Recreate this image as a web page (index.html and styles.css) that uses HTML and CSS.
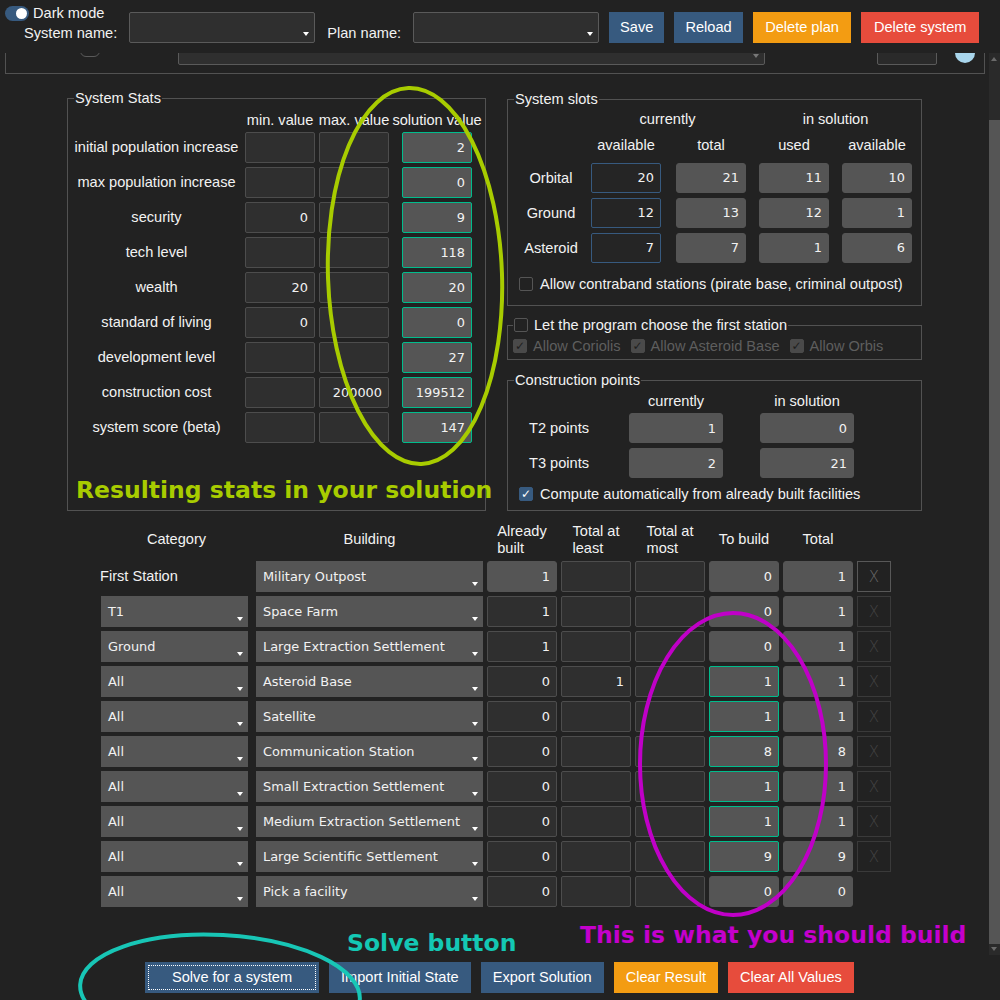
FILE: index.html
```html
<!DOCTYPE html>
<html>
<head>
<meta charset="utf-8">
<title>Colony planner</title>
<link rel="stylesheet" href="styles.css">
</head>
<body>
<div class="toggle-row"><span class="switch"><span class="knob"></span></span><span class="toggle-text">Dark mode</span></div>

<header class="topbar">
  <span class="top-label">System name:</span>
  <div class="combo top-combo"><span class="arrow"></span></div>
  <span class="top-label">Plan name:</span>
  <div class="combo top-combo"><span class="arrow"></span></div>
  <button class="btn primary">Save</button>
  <button class="btn primary">Reload</button>
  <button class="btn warning wide">Delete plan</button>
  <button class="btn danger wide">Delete system</button>
</header>

<main class="scroller">
  <div class="peek">
    <div class="peek-frame">
      <span class="peek-check"></span>
      <span class="peek-combo"><span class="arrow"></span></span>
      <span class="peek-box"></span>
      <span class="peek-help"></span>
    </div>
  </div>

  <div class="panels">
    <fieldset class="frame stats">
      <legend>System Stats</legend>
      <div class="stats-grid">
        <span></span><span class="hd">min. value</span><span class="hd">max. value</span><span class="hd">solution value</span>

        <span class="lbl">initial population increase</span><span class="entry"></span><span class="entry"></span><span class="entry ro ok">2</span>
        <span class="lbl">max population increase</span><span class="entry"></span><span class="entry"></span><span class="entry ro ok">0</span>
        <span class="lbl">security</span><span class="entry">0</span><span class="entry"></span><span class="entry ro ok">9</span>
        <span class="lbl">tech level</span><span class="entry"></span><span class="entry"></span><span class="entry ro ok">118</span>
        <span class="lbl">wealth</span><span class="entry">20</span><span class="entry"></span><span class="entry ro ok">20</span>
        <span class="lbl">standard of living</span><span class="entry">0</span><span class="entry"></span><span class="entry ro ok">0</span>
        <span class="lbl">development level</span><span class="entry"></span><span class="entry"></span><span class="entry ro ok">27</span>
        <span class="lbl">construction cost</span><span class="entry"></span><span class="entry">200000</span><span class="entry ro ok">199512</span>
        <span class="lbl">system score (beta)</span><span class="entry"></span><span class="entry"></span><span class="entry ro ok">147</span>
      </div>
    </fieldset>

    <div class="right-col">
      <fieldset class="frame slots">
        <legend>System slots</legend>
        <div class="slots-grid">
          <span></span><span class="hd span-cur">currently</span><span class="hd span-sol">in solution</span>
          <span></span><span class="sub">available</span><span class="sub">total</span><span class="sub">used</span><span class="sub">available</span>

          <span class="slot-lbl">Orbital</span><span class="entry slot focus">20</span><span class="entry slot ro">21</span><span class="entry slot ro">11</span><span class="entry slot ro">10</span>
          <span class="slot-lbl">Ground</span><span class="entry slot focus">12</span><span class="entry slot ro">13</span><span class="entry slot ro">12</span><span class="entry slot ro">1</span>
          <span class="slot-lbl">Asteroid</span><span class="entry slot focus">7</span><span class="entry slot ro">7</span><span class="entry slot ro">1</span><span class="entry slot ro">6</span>
        </div>
        <div class="check-line contraband"><span class="cbox"></span><span>Allow contraband stations (pirate base, criminal outpost)</span></div>
      </fieldset>

      <fieldset class="frame first-station">
        <legend class="check-legend"><span class="cbox"></span><span>Let the program choose the first station</span></legend>
        <div class="disabled-row">
          <span class="check-line dis"><span class="cbox checked-dis">✓</span><span>Allow Coriolis</span></span>
          <span class="check-line dis"><span class="cbox checked-dis">✓</span><span>Allow Asteroid Base</span></span>
          <span class="check-line dis"><span class="cbox checked-dis">✓</span><span>Allow Orbis</span></span>
        </div>
      </fieldset>

      <fieldset class="frame points">
        <legend>Construction points</legend>
        <div class="points-grid">
          <span></span><span class="hd pt-hd">currently</span><span class="hd pt-hd">in solution</span>
          <span class="pt-lbl">T2 points</span><span class="entry pt ro">1</span><span class="entry pt ro">0</span>
          <span class="pt-lbl">T3 points</span><span class="entry pt ro">2</span><span class="entry pt ro">21</span>
        </div>
        <div class="check-line compute"><span class="cbox checked">✓</span><span>Compute automatically from already built facilities</span></div>
      </fieldset>
    </div>
  </div>

  <div class="build-table">
    <span class="th">Category</span>
    <span class="th">Building</span>
    <span class="th two"><span>Already<br>built</span></span>
    <span class="th two"><span>Total at<br>least</span></span>
    <span class="th two"><span>Total at<br>most</span></span>
    <span class="th">To build</span>
    <span class="th">Total</span>
    <span></span>

    <span class="cat-label">First Station</span>
    <span class="combo fill bld">Military Outpost<span class="arrow"></span></span>
    <span class="entry ro">1</span><span class="entry"></span><span class="entry"></span><span class="entry ro">0</span><span class="entry ro">1</span><span class="xbtn first">X</span>

    <span class="combo fill cat">T1<span class="arrow"></span></span>
    <span class="combo fill bld">Space Farm<span class="arrow"></span></span>
    <span class="entry">1</span><span class="entry"></span><span class="entry"></span><span class="entry ro">0</span><span class="entry ro">1</span><span class="xbtn">X</span>

    <span class="combo fill cat">Ground<span class="arrow"></span></span>
    <span class="combo fill bld">Large Extraction Settlement<span class="arrow"></span></span>
    <span class="entry">1</span><span class="entry"></span><span class="entry"></span><span class="entry ro">0</span><span class="entry ro">1</span><span class="xbtn">X</span>

    <span class="combo fill cat">All<span class="arrow"></span></span>
    <span class="combo fill bld">Asteroid Base<span class="arrow"></span></span>
    <span class="entry">0</span><span class="entry">1</span><span class="entry"></span><span class="entry ro ok">1</span><span class="entry ro">1</span><span class="xbtn">X</span>

    <span class="combo fill cat">All<span class="arrow"></span></span>
    <span class="combo fill bld">Satellite<span class="arrow"></span></span>
    <span class="entry">0</span><span class="entry"></span><span class="entry"></span><span class="entry ro ok">1</span><span class="entry ro">1</span><span class="xbtn">X</span>

    <span class="combo fill cat">All<span class="arrow"></span></span>
    <span class="combo fill bld">Communication Station<span class="arrow"></span></span>
    <span class="entry">0</span><span class="entry"></span><span class="entry"></span><span class="entry ro ok">8</span><span class="entry ro">8</span><span class="xbtn">X</span>

    <span class="combo fill cat">All<span class="arrow"></span></span>
    <span class="combo fill bld">Small Extraction Settlement<span class="arrow"></span></span>
    <span class="entry">0</span><span class="entry"></span><span class="entry"></span><span class="entry ro ok">1</span><span class="entry ro">1</span><span class="xbtn">X</span>

    <span class="combo fill cat">All<span class="arrow"></span></span>
    <span class="combo fill bld">Medium Extraction Settlement<span class="arrow"></span></span>
    <span class="entry">0</span><span class="entry"></span><span class="entry"></span><span class="entry ro ok">1</span><span class="entry ro">1</span><span class="xbtn">X</span>

    <span class="combo fill cat">All<span class="arrow"></span></span>
    <span class="combo fill bld">Large Scientific Settlement<span class="arrow"></span></span>
    <span class="entry">0</span><span class="entry"></span><span class="entry"></span><span class="entry ro ok">9</span><span class="entry ro">9</span><span class="xbtn">X</span>

    <span class="combo fill cat">All<span class="arrow"></span></span>
    <span class="combo fill bld">Pick a facility<span class="arrow"></span></span>
    <span class="entry">0</span><span class="entry"></span><span class="entry"></span><span class="entry ro">0</span><span class="entry ro">0</span><span></span>
  </div>

  <div class="scrollbar"><span class="sb-up"></span><span class="sb-thumb"></span><span class="sb-down"></span></div>
</main>

<footer class="footer">
  <button class="btn primary solve">Solve for a system</button>
  <button class="btn primary">Import Initial State</button>
  <button class="btn primary">Export Solution</button>
  <button class="btn warning">Clear Result</button>
  <button class="btn danger">Clear All Values</button>
</footer>

<svg class="marks" width="1000" height="1000" viewBox="0 0 1000 1000">
  <ellipse cx="415" cy="276" rx="87" ry="188" transform="rotate(-2 415 276)" fill="none" stroke="#a8cc00" stroke-width="4"/>
  <ellipse cx="733" cy="764" rx="93" ry="151" fill="none" stroke="#c000c8" stroke-width="4"/>
  <ellipse cx="220" cy="992" rx="140" ry="57" transform="rotate(3 220 992)" fill="none" stroke="#18c6b6" stroke-width="4"/>
</svg>
<span class="note note-stats">Resulting stats in your solution</span>
<span class="note note-solve">Solve button</span>
<span class="note note-build">This is what you should build</span>
</body>
</html>
```

FILE: styles.css
```css
* { box-sizing: border-box; }

html, body {
  margin: 0;
  padding: 0;
  background: #222222;
  color: #f2f2f2;
  font-family: "Liberation Sans", Arial, sans-serif;
  font-size: 14.6px;
  width: 1000px;
  height: 1000px;
  overflow: hidden;
}

/* ---------- top bar ---------- */
.toggle-row {
  position: absolute;
  left: 5px;
  top: 5px;
  display: flex;
  align-items: center;
  gap: 4px;
  z-index: 2;
  line-height: 16px;
}
.switch {
  width: 24px;
  height: 15px;
  border-radius: 8px;
  background: #375a7f;
  position: relative;
  display: inline-block;
}
.knob {
  position: absolute;
  right: 2px;
  top: 2px;
  width: 11px;
  height: 11px;
  border-radius: 50%;
  background: #ffffff;
}

.topbar {
  height: 53px;
  padding: 12px 0 0 24px;
  display: flex;
  align-items: flex-start;
}
.top-label {
  line-height: 16px;
  margin-top: 13px;
  margin-right: 12px;
}
.top-combo {
  width: 186px;
  height: 31px;
  margin-right: 12px;
}
.top-combo + .top-label + .top-combo { margin-right: 10px; }
.combo {
  position: relative;
  display: flex;
  align-items: center;
  background: #2f2f2f;
  border: 1px solid #5a5a5a;
  border-radius: 2px;
  font-family: "DejaVu Sans", sans-serif;
  font-size: 12.9px;
  color: #f2f2f2;
}
.arrow {
  position: absolute;
  right: 5px;
  bottom: 6px;
  width: 0;
  height: 0;
  border-left: 3.5px solid transparent;
  border-right: 3.5px solid transparent;
  border-top: 4px solid #ffffff;
}

.btn {
  height: 31px;
  border: none;
  border-radius: 0;
  padding: 0 11px;
  margin-right: 10px;
  color: #ffffff;
  font-family: "Liberation Sans", Arial, sans-serif;
  font-size: 14.6px;
  line-height: 31px;
}
.btn.wide { padding: 0 12.5px; }
.primary { background: #375a7f; }
.warning { background: #f39c12; }
.danger { background: #e74c3c; }

/* ---------- scroll area ---------- */
.scroller {
  position: relative;
  height: 902px;
  overflow: hidden;
}
.peek {
  height: 22px;
  overflow: hidden;
}
.peek-frame {
  margin: -20px 0 0 5px;
  width: 980px;
  height: 41px;
  border: 1px solid #525252;
  border-top: none;
  display: flex;
  align-items: flex-end;
  padding-bottom: 8px;
}
.peek-check {
  width: 20px;
  height: 20px;
  margin-left: 74px;
  margin-bottom: 8px;
  border: 1px solid #5a5a5a;
  border-radius: 6px;
}
.peek-combo {
  position: relative;
  width: 587px;
  height: 31px;
  margin-left: 78px;
  background: #2f2f2f;
  border: 1px solid #5a5a5a;
  border-radius: 2px;
}
.peek-combo .arrow { border-top-color: #777; }
.peek-box {
  width: 60px;
  height: 31px;
  margin-left: 112px;
  background: #2a2a2a;
  border: 1px solid #5a5a5a;
  border-radius: 2px;
}
.peek-help {
  width: 20px;
  height: 20px;
  margin-left: 18px;
  margin-bottom: 2px;
  border-radius: 50%;
  background: #a9d6ec;
}

/* ---------- panels ---------- */
.panels {
  display: flex;
  align-items: flex-start;
  margin: 15px 0 0 67px;
  gap: 21px;
}
.frame {
  margin: 0;
  padding: 0;
  min-width: 0;
  border: 1px solid #525252;
}
.frame legend {
  padding: 0 1px;
  margin-left: 6px;
  line-height: 16px;
  height: 16px;
}

.stats {
  width: 419px;
  padding-bottom: 67px;
}
.stats-grid {
  display: grid;
  grid-template-columns: 177px 74px 83px 70px;
  grid-template-rows: 22px;
  grid-auto-rows: 31px;
  row-gap: 4px;
}
.hd {
  line-height: 16px;
  white-space: nowrap;
  text-align: center;
  align-self: end;
}
.stats-grid .hd {
  width: 70px;
  display: flex;
  justify-content: center;
}
.lbl {
  text-align: center;
  line-height: 31px;
  white-space: nowrap;
}

.entry {
  width: 70px;
  height: 31px;
  background: #2f2f2f;
  border: 1px solid #4d4d4d;
  border-radius: 2px;
  font-family: "DejaVu Sans", sans-serif;
  font-size: 12.9px;
  color: #f2f2f2;
  text-align: right;
  padding-right: 6px;
  line-height: 29px;
}
.entry.ro {
  background: #555555;
  border-color: #555555;
  border-radius: 3px;
}
.entry.ro.ok { border-color: #00bc8c; border-radius: 2px; }

.right-col {
  width: 415px;
  margin-top: 1px;
}
.slots { width: 415px; padding-bottom: 13px; }
.slots-grid {
  display: grid;
  grid-template-columns: 83px 85px 83px 83px 70px;
  grid-template-rows: 24px 28px 35px 35px 35px;
}
.slots-grid .hd { align-self: center; }
.span-cur { grid-column: 2 / 4; padding-right: 15px; }
.span-sol { grid-column: 4 / 6; }
.sub {
  width: 70px;
  text-align: center;
  align-self: center;
  line-height: 16px;
  white-space: nowrap;
  display: flex;
  justify-content: center;
}
.slot-lbl {
  text-align: center;
  margin-top: 4px;
  line-height: 30px;
  padding-left: 3px;
}
.entry.slot {
  height: 30px;
  margin-top: 4px;
  line-height: 28px;
}
.entry.focus {
  background: #252525;
  border-color: #375a7f;
}

.check-line {
  display: flex;
  align-items: center;
  gap: 7px;
  line-height: 16px;
  white-space: nowrap;
}
.contraband {
  margin: 12px 0 0 11px;
  height: 16px;
}
.cbox {
  width: 14px;
  height: 14px;
  flex: none;
  border: 1px solid #555555;
  border-radius: 2px;
  display: inline-flex;
  align-items: center;
  justify-content: center;
  font-family: "DejaVu Sans", sans-serif;
  font-size: 12px;
  line-height: 1;
}
.cbox.checked {
  background: #375a7f;
  border-color: #375a7f;
  color: #ffffff;
}
.cbox.checked-dis {
  background: #4a4a4a;
  border-color: #4a4a4a;
  color: #1e1e1e;
}

.first-station {
  width: 415px;
  margin-top: 11px;
}
.frame legend.check-legend {
  display: flex;
  align-items: center;
  gap: 6px;
  margin-left: 5px;
}
.disabled-row {
  height: 26px;
  display: flex;
  align-items: center;
  padding-left: 5px;
  gap: 10px;
}
.check-line.dis { color: #5e5e5e; gap: 6px; }

.points { width: 415px; margin-top: 12px; padding-bottom: 5px; }
.points-grid {
  display: grid;
  grid-template-columns: 100px 131px 94px;
  grid-template-rows: 25px 35px 35px;
  padding-left: 21px;
}
.pt-hd {
  width: 94px;
  align-self: center;
  display: flex;
  justify-content: center;
}
.pt-lbl { line-height: 30px; }
.entry.pt {
  width: 94px;
  height: 30px;
  line-height: 30px;
}
.compute {
  height: 22px;
  margin-left: 11px;
}

/* ---------- building table ---------- */
.build-table {
  display: grid;
  grid-template-columns: 151px 227px 70px 70px 70px 70px 70px 34px;
  grid-template-rows: 35px;
  grid-auto-rows: 31px;
  column-gap: 4px;
  row-gap: 4px;
  margin: 11px 0 0 101px;
  width: 790px;
}
.th {
  display: flex;
  align-items: center;
  justify-content: center;
  text-align: center;
  line-height: 17px;
  white-space: nowrap;
}
.th.two span { text-align: left; }
.cat-label {
  line-height: 31px;
  margin-left: -1px;
}
.combo.fill {
  background: #555555;
  border: none;
  border-radius: 0;
  padding-left: 7px;
  height: 31px;
  white-space: nowrap;
}
.combo.cat { width: 147px; }
.combo.bld { width: 227px; }

.xbtn {
  width: 34px;
  height: 31px;
  border: 1px solid #3a3a3a;
  display: flex;
  align-items: center;
  justify-content: center;
  color: #444444;
  font-family: "DejaVu Sans", sans-serif;
  font-weight: 200;
  font-size: 15px;
}
.xbtn.first { border-color: #585858; color: #6a6a6a; }

/* scrollbar */
.scrollbar {
  position: absolute;
  right: 0;
  top: 0;
  width: 11px;
  height: 902px;
  background: #2a2a2a;
}
.sb-up, .sb-down {
  position: absolute;
  left: 2px;
  width: 0;
  height: 0;
  border-left: 3.5px solid transparent;
  border-right: 3.5px solid transparent;
}
.sb-up { top: 4px; border-bottom: 4px solid #6a6a6a; }
.sb-down { bottom: 4px; border-top: 4px solid #6a6a6a; }
.sb-thumb {
  position: absolute;
  left: 0;
  right: 0;
  top: 67px;
  bottom: 11px;
  background: #555555;
}

/* footer */
.footer {
  height: 45px;
  padding: 7px 0 0 145px;
  display: flex;
  align-items: flex-start;
}
.footer .btn { height: 31px; padding: 0 12px; }
.footer .btn.solve {
  padding: 0 27px;
  outline: 1px dotted #ffffff;
  outline-offset: -4px;
}

/* annotations drawn over the screenshot */
.marks {
  position: absolute;
  left: 0;
  top: 0;
  pointer-events: none;
}
.note {
  position: absolute;
  font-family: "DejaVu Sans", sans-serif;
  font-weight: bold;
  font-size: 23.5px;
  line-height: 26px;
  white-space: nowrap;
}
.note-stats { left: 76px; top: 477px; color: #a8cc00; }
.note-solve { left: 347px; top: 930px; color: #14c8b4; }
.note-build { left: 580px; top: 922px; color: #c400cc; }
```
